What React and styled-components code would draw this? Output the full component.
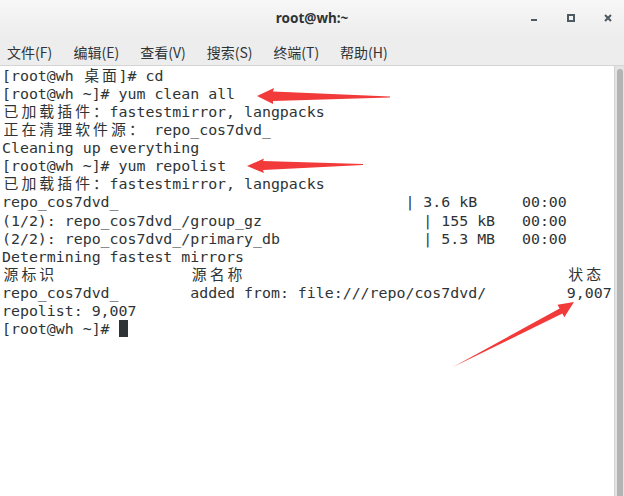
import React from 'react';
import styled, {createGlobalStyle} from 'styled-components';

const GlobalStyle = createGlobalStyle`
  html, body {
    margin: 0;
    padding: 0;
    background: #ffffff;
  }
`;

const Window = styled.div`
  position: relative;
  width: 624px;
  height: 496px;
  display: flex;
  flex-direction: column;
  overflow: hidden;
  background: #ffffff;
`;

const TitleBar = styled.div`
  height: 36px;
  flex: none;
  display: grid;
  grid-template-columns: 1fr auto 1fr;
  align-items: center;
  background: linear-gradient(#f7f7f7, #ededed);
`;

const Title = styled.div`
  grid-column: 2;
  font-family: "Noto Sans", "DejaVu Sans", sans-serif;
  font-weight: 700;
  font-size: 13.5px;
  color: #2e3436;
  padding-bottom: 1px;
`;

const Controls = styled.div`
  grid-column: 3;
  justify-self: end;
  display: flex;
  gap: 7px;
  padding-right: 1px;
`;

const ControlButton = styled.div`
  width: 30px;
  height: 36px;
  display: flex;
  align-items: center;
  justify-content: center;
  svg {
    display: block;
  }
`;

const MenuBar = styled.div`
  height: 29px;
  flex: none;
  display: flex;
  align-items: center;
  gap: 16.6px;
  padding-left: 7px;
  background: #ededed;
  border-bottom: 1px solid #d5d5d5;
`;

const MenuItem = styled.div`
  width: 50px;
  font-family: "Noto Sans CJK SC", "Noto Sans", sans-serif;
  font-size: 14px;
  color: #2e3436;
  white-space: nowrap;
  padding-top: 2px;
`;

const Body = styled.div`
  flex: 1;
  display: flex;
  min-height: 0;
`;

const Terminal = styled.div`
  flex: 1;
  padding: 1px 0 0 2px;
  font-family: "DejaVu Sans Mono", "Noto Sans CJK SC", monospace;
  font-size: 14.9px;
  line-height: 18.07px;
  color: #2e3436;
  white-space: pre;
`;

const Line = styled.div`
  height: 18.07px;
`;

const Wide = styled.span`
  display: inline-block;
  width: 2ch;
  text-align: center;
  vertical-align: top;
`;

const Cursor = styled.span`
  display: inline-block;
  width: 1ch;
  height: 17px;
  vertical-align: top;
  background: #2e3436;
`;

const Track = styled.div`
  width: 10px;
  flex: none;
  display: flex;
  background: #e4e4e4;
  border-left: 1px solid #d2d2d2;
  box-sizing: border-box;
  padding: 3px 1px 0 2px;
`;

const Thumb = styled.div`
  flex: 1;
  background: #b4b4b4;
  border-radius: 3px 3px 0 0;
`;

const Annotations = styled.svg`
  position: absolute;
  top: 0;
  left: 0;
  pointer-events: none;
`;

const wide = /[\u2E80-\u9FFF\uFF00-\uFFEF]/;

function Cells({text}) {
    const parts = [];
    let run = '';
    [...text].forEach((ch, i) => {
        if (wide.test(ch)) {
            if (run) parts.push(run);
            run = '';
            parts.push(<Wide key={i}>{ch}</Wide>);
        } else {
            run += ch;
        }
    });
    if (run) parts.push(run);
    return parts;
}

const lines = [
    '[root@wh 桌面]# cd',
    '[root@wh ~]# yum clean all',
    '已加载插件：fastestmirror, langpacks',
    '正在清理软件源： repo_cos7dvd_',
    'Cleaning up everything',
    '[root@wh ~]# yum repolist',
    '已加载插件：fastestmirror, langpacks',
    'repo_cos7dvd_                                | 3.6 kB     00:00',
    '(1/2): repo_cos7dvd_/group_gz                  | 155 kB   00:00',
    '(2/2): repo_cos7dvd_/primary_db                | 5.3 MB   00:00',
    'Determining fastest mirrors',
    '源标识               源名称                                    状态',
    'repo_cos7dvd_        added from: file:///repo/cos7dvd/         9,007',
    'repolist: 9,007',
];

const menu = ['文件(F)', '编辑(E)', '查看(V)', '搜索(S)', '终端(T)', '帮助(H)'];

const ink = '#4e5a61';

export default function App() {
    return (
        <Window>
            <GlobalStyle/>
            <TitleBar>
                <Title>root@wh:~</Title>
                <Controls>
                    <ControlButton>
                        <svg width="8" height="8" viewBox="0 0 8 8">
                            <rect x="1" y="5" width="6" height="2" fill={ink}/>
                        </svg>
                    </ControlButton>
                    <ControlButton>
                        <svg width="8" height="8" viewBox="0 0 8 8">
                            <rect x="1" y="1" width="6" height="6" fill="none" stroke={ink} strokeWidth="2"/>
                        </svg>
                    </ControlButton>
                    <ControlButton>
                        <svg width="8" height="8" viewBox="0 0 8 8">
                            <path d="M1 1 L7 7 M7 1 L1 7" stroke={ink} strokeWidth="2"/>
                        </svg>
                    </ControlButton>
                </Controls>
            </TitleBar>
            <MenuBar>
                {menu.map(m => <MenuItem key={m}>{m}</MenuItem>)}
            </MenuBar>
            <Body>
                <Terminal>
                    {lines.map((l, i) => (
                        <Line key={i}><Cells text={l}/></Line>
                    ))}
                    <Line>[root@wh ~]# <Cursor/></Line>
                </Terminal>
                <Track>
                    <Thumb/>
                </Track>
            </Body>
            <Annotations width="624" height="496" viewBox="0 0 624 496">
                <polygon fill="#f23a3a"
                         points="257,96 274,88 273,91.5 390,96.5 390,97.5 273,101 273,104"/>
                <polygon fill="#f23a3a"
                         points="247,166 264,158.5 263,161 363,164 363,165 263,170 264,173"/>
                <polygon fill="#f23a3a"
                         points="574,302 557.5,304.8 559.6,308.4 453,367 562.4,313.6 564.3,317.2"/>
            </Annotations>
        </Window>
    );
}
